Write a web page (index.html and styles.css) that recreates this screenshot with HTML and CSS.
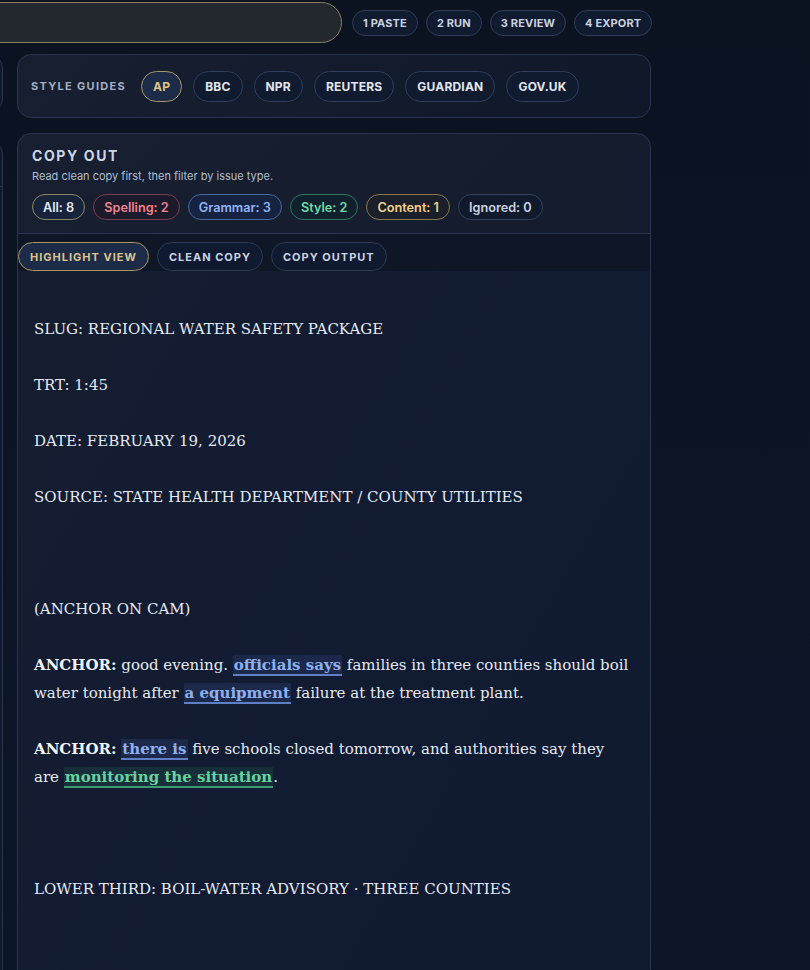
FILE: index.html
```html
<!DOCTYPE html>
<html lang="en">
<head>
    <meta charset="utf-8">
    <title>Copy Desk - Review</title>
    <link rel="stylesheet" href="styles.css">
</head>
<body>
    <div class="app">
        <!-- Barra superior -->
        <header class="topbar">
            <div class="search"></div>
            <nav class="steps">
                <span class="step">1 PASTE</span>
                <span class="step">2 RUN</span>
                <span class="step">3 REVIEW</span>
                <span class="step">4 EXPORT</span>
            </nav>
        </header>

        <div class="layout">
            <!-- Coluna da esquerda (cortada) -->
            <aside class="side">
                <div class="side-panel short"></div>
                <div class="side-panel tall">
                    <div class="side-divider"></div>
                </div>
            </aside>

            <main class="main">
                <section class="panel guides">
                    <span class="label">STYLE GUIDES</span>
                    <button class="pill active">AP</button>
                    <button class="pill">BBC</button>
                    <button class="pill">NPR</button>
                    <button class="pill">REUTERS</button>
                    <button class="pill">GUARDIAN</button>
                    <button class="pill">GOV.UK</button>
                </section>

                <section class="panel output">
                    <div class="output-head">
                        <h2>COPY OUT</h2>
                        <p>Read clean copy first, then filter by issue type.</p>
                        <div class="filters">
                            <span class="chip all">All: 8</span>
                            <span class="chip spelling">Spelling: 2</span>
                            <span class="chip grammar">Grammar: 3</span>
                            <span class="chip style">Style: 2</span>
                            <span class="chip content">Content: 1</span>
                            <span class="chip ignored">Ignored: 0</span>
                        </div>
                    </div>

                    <div class="tabs">
                        <button class="tab active">HIGHLIGHT VIEW</button>
                        <button class="tab">CLEAN COPY</button>
                        <button class="tab">COPY OUTPUT</button>
                    </div>

<div class="script">SLUG: REGIONAL WATER SAFETY PACKAGE

TRT: 1:45

DATE: FEBRUARY 19, 2026

SOURCE: STATE HEALTH DEPARTMENT / COUNTY UTILITIES



(ANCHOR ON CAM)

<b>ANCHOR:</b> good evening. <span class="hl grammar">officials says</span> families in three counties should boil water tonight after <span class="hl grammar">a equipment</span> failure at the treatment plant.

<b>ANCHOR:</b> <span class="hl grammar">there is</span> five schools closed tomorrow, and authorities say they are <span class="hl style">monitoring the situation</span>.



LOWER THIRD: BOIL-WATER ADVISORY · THREE COUNTIES
</div>
                </section>
            </main>
        </div>
    </div>
</body>
</html>
```

FILE: styles.css
```css
/* Geral */
* {
    margin: 0;
    padding: 0;
    box-sizing: border-box;
}

body {
    background: linear-gradient(180deg, #0b1220 0%, #0c1426 60%, #0d1628 100%);
    color: #dfe6f1;
    font-family: "Inter", "Liberation Sans", sans-serif;
    overflow: hidden;
    height: 970px;
}

button {
    font-family: inherit;
    cursor: pointer;
    white-space: nowrap;
}

.app {
    width: 870px;
    margin-left: -200px;
    padding-top: 2px;
}

/* Barra superior */
.topbar {
    display: flex;
    align-items: center;
    gap: 10px;
}

.search {
    flex: none;
    width: 542px;
    height: 41px;
    background: #23272e;
    border: 1px solid #8a7f63;
    border-radius: 21px;
}

.steps {
    display: flex;
    flex: none;
    gap: 8px;
}

.step {
    display: inline-flex;
    align-items: center;
    white-space: nowrap;
    height: 26px;
    padding: 0 10px;
    border: 1px solid #2e3c58;
    border-radius: 13px;
    background: #111b2f;
    color: #c9d3e2;
    font-size: 11px;
    font-weight: 700;
    letter-spacing: 0.15px;
}

/* Layout */
.layout {
    display: grid;
    grid-template-columns: 203px 634px;
    column-gap: 14px;
    margin-top: 11px;
}

.side-panel {
    border: 1px solid #27344e;
    border-radius: 14px;
    background: #111a2c;
}

.side-panel.short {
    height: 59px;
}

.side-panel.tall {
    height: 900px;
    margin-top: 27px;
    padding-top: 45px;
}

.side-divider {
    border-top: 1px solid #27344e;
}

.panel {
    border: 1px solid #28354f;
    border-radius: 14px;
    background: linear-gradient(135deg, #171f31 0%, #0f1829 100%);
}

/* Guias de estilo */
.guides {
    display: flex;
    align-items: center;
    gap: 11px;
    height: 64px;
    padding: 0 13px;
}

.label {
    font-size: 11px;
    font-weight: 700;
    letter-spacing: 1.3px;
    color: #a3afc3;
    margin-right: 4px;
}

.pill {
    height: 31px;
    padding: 0 11px;
    border: 1px solid #2f3d59;
    border-radius: 16px;
    background: #111b30;
    color: #e1e7f1;
    font-size: 12px;
    font-weight: 700;
    letter-spacing: 0.2px;
}

.pill.active {
    border-color: #a8975f;
    background: #1c2b47;
    color: #dcc48c;
}

/* Copy out */
.output {
    margin-top: 15px;
    height: 860px;
    overflow: hidden;
}

.output-head {
    padding: 13px 14px 13px;
    border-bottom: 1px solid #2a3752;
}

.output-head h2 {
    font-size: 14px;
    font-weight: 700;
    letter-spacing: 1.6px;
    color: #cdd6e4;
    line-height: 18px;
}

.output-head p {
    font-size: 11px;
    color: #b2bdcd;
    line-height: 16px;
    margin-top: 3px;
}

.filters {
    display: flex;
    gap: 8px;
    margin-top: 10px;
}

.chip {
    display: inline-flex;
    align-items: center;
    height: 26px;
    padding: 0 10px;
    border: 1px solid #34435e;
    border-radius: 13px;
    font-size: 12.7px;
    font-weight: 600;
    color: #c9d1de;
    background: #111a2d;
}

.chip.all { border-color: #8b8664; color: #e3e8f1; background: #17233b; }
.chip.spelling { border-color: #7b3c4d; color: #f2818c; background: #1a1a2b; }
.chip.grammar { border-color: #4a699f; color: #93b4f5; background: #152240; }
.chip.style { border-color: #2e7561; color: #72dbaa; background: #10212d; }
.chip.content { border-color: #8a7a47; color: #f1d18c; background: #1a1f2a; }

/* Abas */
.tabs {
    display: flex;
    gap: 8px;
    padding: 8px 0 0;
    background: #0f1726;
}

.tab {
    height: 29px;
    padding: 0 11px;
    border: 1px solid #2c3a56;
    border-radius: 15px;
    background: #0f1930;
    color: #c9d3e2;
    font-size: 11px;
    font-weight: 700;
    letter-spacing: 1px;
}

.tab.active {
    border-color: #a8975f;
    background: #1c2b48;
    color: #dcc48c;
}

/* Texto do roteiro */
.script {
    white-space: pre-wrap;
    font-family: "DejaVu Serif", "Liberation Serif", serif;
    font-size: 15px;
    line-height: 28px;
    color: #e4e9f2;
    padding: 44px 16px 20px;
    height: 100%;
    background: linear-gradient(120deg, #151d30 0%, #111b32 50%, #0f1a30 100%);
}

.script b {
    font-weight: 700;
    color: #f1f4f9;
}

.hl {
    font-weight: 700;
    padding: 1px 1px 0;
}

.hl.grammar {
    color: #8fb0f1;
    background: rgba(80, 115, 200, 0.16);
    border-bottom: 2px solid #5f80c6;
}

.hl.style {
    color: #67d39f;
    background: rgba(60, 160, 110, 0.14);
    border-bottom: 2px solid #3f9a70;
}
```
